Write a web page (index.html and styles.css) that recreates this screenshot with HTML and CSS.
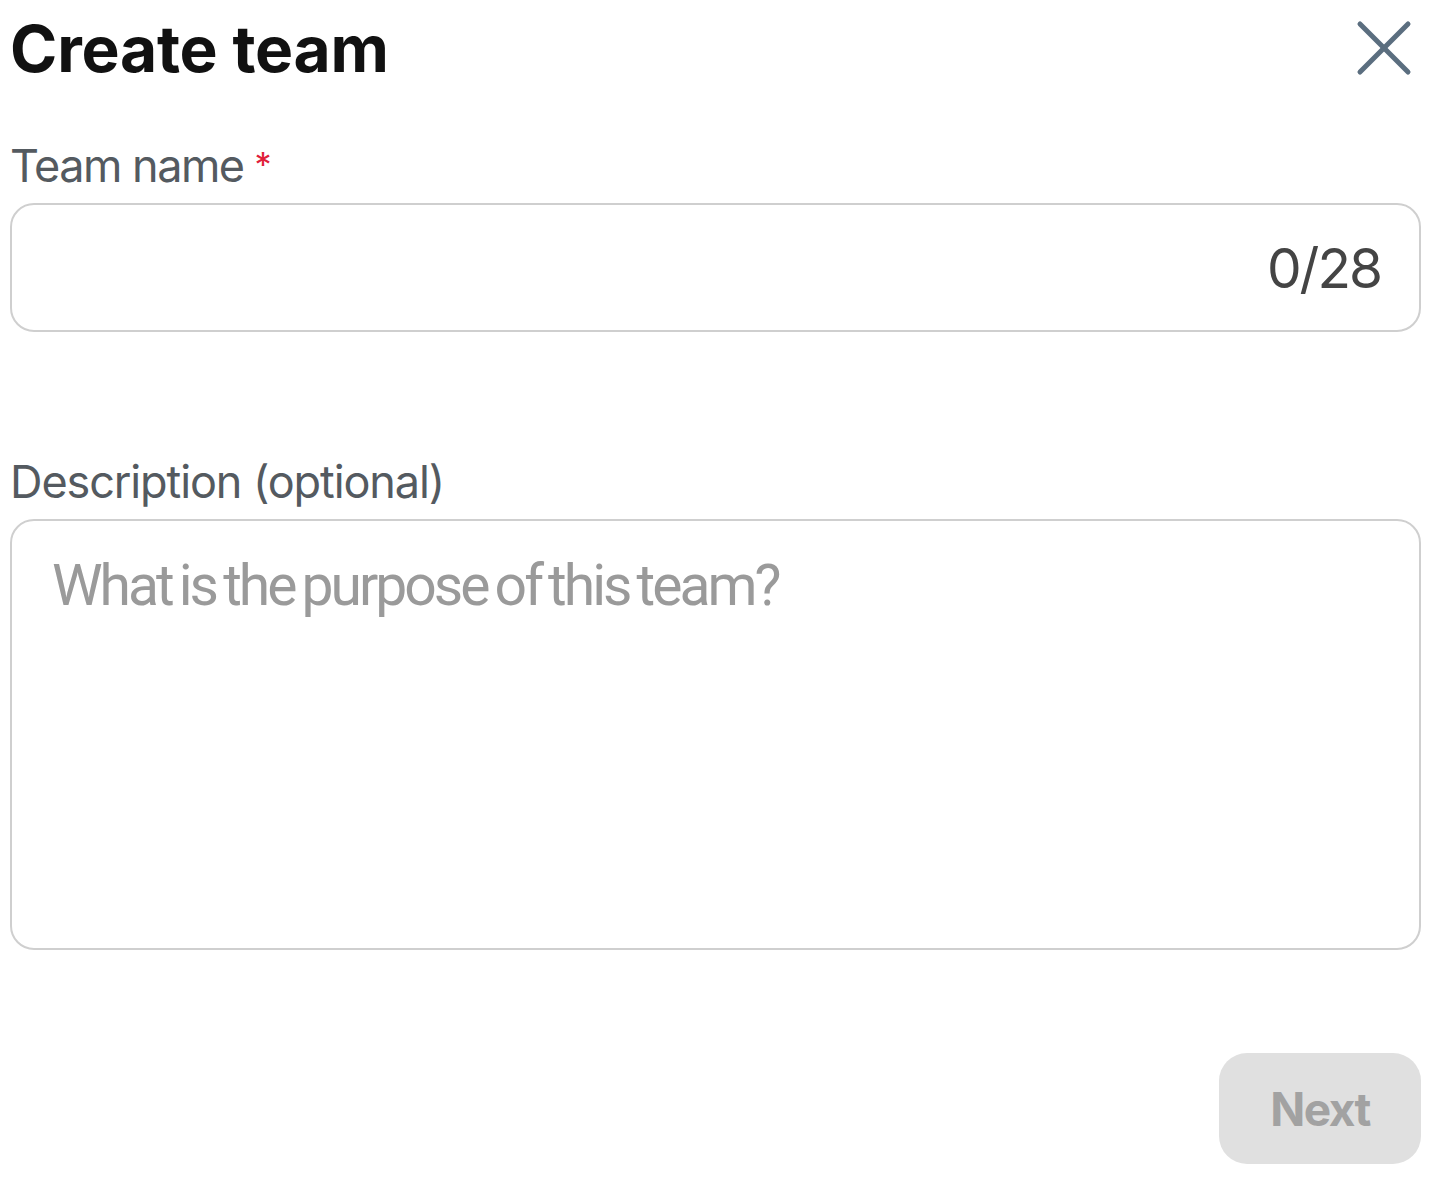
FILE: index.html
```html
<!DOCTYPE html>
<html lang="en">
<head>
<meta charset="utf-8">
<title>Create team</title>
<link rel="stylesheet" href="styles.css">
</head>
<body>
<div class="dialog">
  <header class="header">
    <h1 class="title">Create team</h1>
    <button class="close" aria-label="Close">
      <svg width="56" height="56" viewBox="0 0 56 56" fill="none" stroke="#5b6e7f" stroke-width="5" stroke-linecap="round">
        <line x1="4" y1="4" x2="52" y2="52"/>
        <line x1="52" y1="4" x2="4" y2="52"/>
      </svg>
    </button>
  </header>

  <div class="field field-name">
    <label class="label label-name" for="team-name">Team name<span class="req">*</span></label>
    <div class="input-box">
      <input id="team-name" class="input" type="text">
      <span class="counter">0/28</span>
    </div>
  </div>

  <div class="field field-desc">
    <label class="label label-desc" for="team-desc">Description (optional)</label>
    <textarea id="team-desc" class="textarea" placeholder="What is the purpose of this team?"></textarea>
  </div>

  <footer class="footer">
    <button class="next" disabled>Next</button>
  </footer>
</div>
</body>
</html>
```

FILE: styles.css
```css
html, body {
  margin: 0;
  padding: 0;
  background: #ffffff;
}

body {
  font-family: Inter, "Noto Sans", "Liberation Sans", sans-serif;
}

.dialog {
  padding: 10px 19px 0 10px;
  box-sizing: border-box;
  width: 1440px;
}

.header {
  display: flex;
  justify-content: space-between;
  align-items: flex-start;
}

.title {
  margin: 0;
  font-size: 64px;
  line-height: 77px;
  font-weight: 700;
  color: #111111;
  letter-spacing: -0.2px;
}

.close {
  margin: 10px 9px 0 0;
  padding: 0;
  border: 0;
  background: none;
  width: 56px;
  height: 56px;
  display: block;
  cursor: pointer;
}

.close svg {
  display: block;
}

.field {
  display: flex;
  flex-direction: column;
  gap: 10px;
}

.field-name {
  margin-top: 52px;
}

.field-desc {
  margin-top: 123px;
}

.label {
  font-size: 45px;
  line-height: 54px;
  color: #545a60;
  font-weight: 400;
}

.label-name {
  letter-spacing: -1.5px;
}

.label-desc {
  letter-spacing: -1.1px;
}

.req {
  color: #e0203a;
  font-size: 34px;
  margin-left: 11px;
  letter-spacing: 0;
  vertical-align: top;
  position: relative;
  top: -1px;
}

.input-box {
  display: flex;
  align-items: center;
  height: 129px;
  box-sizing: border-box;
  border: 2px solid #cfcfcf;
  border-radius: 24px;
  padding: 0 38px 0 40px;
}

.input {
  flex: 1;
  border: 0;
  outline: none;
  background: transparent;
  font-family: inherit;
  font-size: 55px;
  color: #333;
  min-width: 0;
}

.counter {
  font-size: 55px;
  line-height: 66px;
  color: #444444;
  letter-spacing: -2px;
}

.textarea {
  display: block;
  box-sizing: border-box;
  width: 100%;
  height: 431px;
  border: 2px solid #cfcfcf;
  border-radius: 24px;
  padding: 31px 40px 30px;
  font-family: Roboto, Inter, sans-serif;
  font-size: 57px;
  line-height: 68px;
  letter-spacing: -3px;
  word-spacing: -4px;
  color: #333;
  resize: none;
  outline: none;
  margin: 0;
}

.textarea::placeholder {
  color: #9a9a9a;
  opacity: 1;
}

.footer {
  display: flex;
  justify-content: flex-end;
  margin-top: 103px;
}

.next {
  width: 202px;
  height: 111px;
  border: 0;
  border-radius: 28px;
  background: #e0e0e0;
  color: #a2a2a2;
  font-family: inherit;
  font-size: 46px;
  font-weight: 700;
  letter-spacing: -1.5px;
  padding: 0;
}
```
